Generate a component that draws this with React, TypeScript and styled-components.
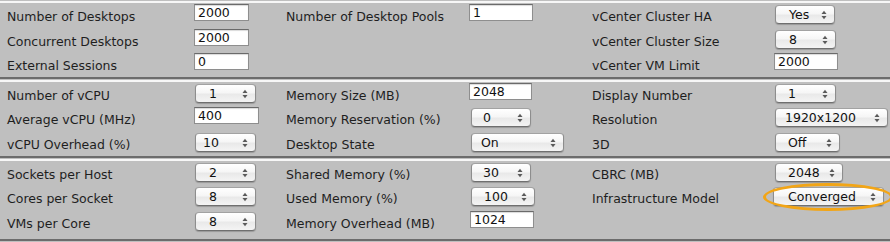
import styled, { createGlobalStyle } from "styled-components";

const GlobalStyle = createGlobalStyle`
  html, body {
    margin: 0;
    padding: 0;
    background: #bfbfbf;
  }
  body {
    font-family: "DejaVu Sans", "Liberation Sans", sans-serif;
    font-size: 12.5px;
    color: #1e1e1e;
  }
`;

const Panel = styled.div`
  width: 890px;
  height: 242px;
  padding-top: 1px;
  box-sizing: border-box;
  background: #bfbfbf;
  overflow: hidden;
`;

const Section = styled.div<{ $extra?: number }>`
  display: grid;
  grid-template-columns: 279px 306px 1fr;
  padding-left: 7px;
  padding-bottom: ${(p) => p.$extra ?? 0}px;
  border-top: 2px solid #f7f7f7;
  border-bottom: 2px solid #6c6c6c;
  margin-bottom: 1px;
`;

const Column = styled.div`
  display: flex;
  flex-direction: column;
`;

const Field = styled.div<{ $label: number }>`
  display: grid;
  grid-template-columns: ${(p) => p.$label}px auto;
  align-items: start;
  height: 24.5px;
`;

const Label = styled.span`
  margin-top: 6px;
  line-height: 15px;
  white-space: nowrap;
`;

const TextBox = styled.div<{ $w: number; $x?: number }>`
  margin-top: 1px;
  margin-left: ${(p) => p.$x ?? 0}px;
  width: ${(p) => p.$w}px;
  height: 17px;
  box-sizing: border-box;
  background: #fff;
  border: 1px solid #8e8e8e;
  border-top-color: #6a6a6a;
  box-shadow: inset 0 1px 1px rgba(0, 0, 0, 0.15);
  padding-left: 3px;
  line-height: 15px;
  color: #111;
`;

const PopUp = styled.div<{ $w: number; $x?: number; $pad: number }>`
  position: relative;
  margin-top: 2px;
  margin-left: ${(p) => p.$x ?? 1}px;
  width: ${(p) => p.$w}px;
  height: 19px;
  box-sizing: border-box;
  border: 1px solid #8d8d8d;
  border-top-color: #a2a2a2;
  border-bottom-color: #6f6f6f;
  border-radius: 4px;
  background: linear-gradient(#ffffff, #f6f6f6 45%, #e9e9e9 55%, #f4f4f4);
  box-shadow: 0 1px 1px rgba(0, 0, 0, 0.2);
  padding-left: ${(p) => p.$pad}px;
  line-height: 17px;
  color: #111;
  white-space: nowrap;

  svg {
    position: absolute;
    right: 7px;
    top: 4px;
  }
`;

const Highlight = styled.div`
  position: relative;

  &::after {
    content: "";
    position: absolute;
    left: -11px;
    right: -3px;
    top: -2px;
    bottom: -5px;
    border: 3px solid #f2a516;
    border-radius: 50%;
    pointer-events: none;
  }
`;

const Arrows = () => (
  <svg width="6" height="10" viewBox="0 0 6 10">
    <polygon points="0.5,4 3,0.8 5.5,4" fill="#5a5a5a" />
    <polygon points="0.5,6 3,9.2 5.5,6" fill="#5a5a5a" />
  </svg>
);

type Select = { w: number; pad: number; x?: number; value: string };

const Pop = ({ w, pad, x, value }: Select) => (
  <PopUp $w={w} $pad={pad} $x={x}>
    {value}
    <Arrows />
  </PopUp>
);

const App = () => (
  <>
    <GlobalStyle />
    <Panel>
      <Section>
        <Column>
          <Field $label={187}>
            <Label>Number of Desktops</Label>
            <TextBox $w={55}>2000</TextBox>
          </Field>
          <Field $label={187}>
            <Label>Concurrent Desktops</Label>
            <TextBox $w={55}>2000</TextBox>
          </Field>
          <Field $label={187}>
            <Label>External Sessions</Label>
            <TextBox $w={55}>0</TextBox>
          </Field>
        </Column>
        <Column>
          <Field $label={183}>
            <Label>Number of Desktop Pools</Label>
            <TextBox $w={64}>1</TextBox>
          </Field>
        </Column>
        <Column>
          <Field $label={182}>
            <Label>vCenter Cluster HA</Label>
            <Pop w={60} pad={13} value="Yes" />
          </Field>
          <Field $label={182}>
            <Label>vCenter Cluster Size</Label>
            <Pop w={61} pad={13} value="8" />
          </Field>
          <Field $label={182}>
            <Label>vCenter VM Limit</Label>
            <TextBox $w={64}>2000</TextBox>
          </Field>
        </Column>
      </Section>

      <Section $extra={0.5}>
        <Column>
          <Field $label={187}>
            <Label>Number of vCPU</Label>
            <Pop w={61} pad={13} value="1" />
          </Field>
          <Field $label={187}>
            <Label>Average vCPU (MHz)</Label>
            <TextBox $w={65}>400</TextBox>
          </Field>
          <Field $label={187}>
            <Label>vCPU Overhead (%)</Label>
            <Pop w={61} pad={7} value="10" />
          </Field>
        </Column>
        <Column>
          <Field $label={183}>
            <Label>Memory Size (MB)</Label>
            <TextBox $w={63}>2048</TextBox>
          </Field>
          <Field $label={183}>
            <Label>Memory Reservation (%)</Label>
            <Pop w={60} x={2} pad={11} value="0" />
          </Field>
          <Field $label={183}>
            <Label>Desktop State</Label>
            <Pop w={93} x={2} pad={9} value="On" />
          </Field>
        </Column>
        <Column>
          <Field $label={182}>
            <Label>Display Number</Label>
            <Pop w={61} pad={12} value="1" />
          </Field>
          <Field $label={182}>
            <Label>Resolution</Label>
            <Pop w={113} pad={9} value="1920x1200" />
          </Field>
          <Field $label={182}>
            <Label>3D</Label>
            <Pop w={65} pad={12} value="Off" />
          </Field>
        </Column>
      </Section>

      <Section $extra={4.5}>
        <Column>
          <Field $label={187}>
            <Label>Sockets per Host</Label>
            <Pop w={61} pad={13} value="2" />
          </Field>
          <Field $label={187}>
            <Label>Cores per Socket</Label>
            <Pop w={61} pad={13} value="8" />
          </Field>
          <Field $label={187}>
            <Label>VMs per Core</Label>
            <Pop w={61} pad={13} value="8" />
          </Field>
        </Column>
        <Column>
          <Field $label={183}>
            <Label>Shared Memory (%)</Label>
            <Pop w={60} x={2} pad={11} value="30" />
          </Field>
          <Field $label={183}>
            <Label>Used Memory (%)</Label>
            <Pop w={64} x={2} pad={12} value="100" />
          </Field>
          <Field $label={183}>
            <Label>Memory Overhead (MB)</Label>
            <TextBox $w={64} $x={1}>1024</TextBox>
          </Field>
        </Column>
        <Column>
          <Field $label={182}>
            <Label>CBRC (MB)</Label>
            <Pop w={68} pad={12} value="2048" />
          </Field>
          <Field $label={182}>
            <Label>Infrastructure Model</Label>
            <Highlight>
              <Pop w={111} x={-1} pad={14} value="Converged" />
            </Highlight>
          </Field>
        </Column>
      </Section>
    </Panel>
  </>
);

export default App;
